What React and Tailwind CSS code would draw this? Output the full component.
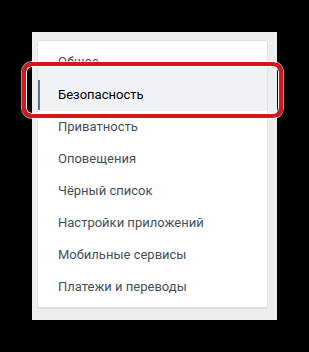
import React from 'react'

const items = [
  'Приватность',
  'Оповещения',
  'Чёрный список',
  'Настройки приложений',
  'Мобильные сервисы',
  'Платежи и переводы',
]

export default function App() {
  return (
    <div
      className="w-[309px] h-[352px] bg-black pt-[32px] pl-[32px]"
      style={{ fontFamily: 'Roboto, "Noto Sans", "Liberation Sans", sans-serif' }}
    >
      <div className="relative w-[245px] h-[288px] bg-[#edeef0] pt-[8px] pl-[5px]">
        <div className="w-[231px] h-[268px] bg-white border border-[#e1e3e6] rounded-[3px] shadow-[0_1px_0_#dcdee3] pt-[5px]">
          <div className="h-[32px] flex items-center pl-[20px] text-[13px] text-[#454f5b]">
            Общее
          </div>
          <div className="relative -mt-[12px] h-[45px] flex items-end bg-[#f0f2f5]">
            <div className="w-[2px] h-[30px] mb-[1px] bg-[#5f7286]" />
            <div className="h-[32px] flex items-center pl-[18px] text-[13px] text-black">
              Безопасность
            </div>
          </div>
          {items.map((t) => (
            <div key={t} className="h-[32px] flex items-center pl-[20px] text-[13px] text-[#454f5b]">
              {t}
            </div>
          ))}
        </div>
        <div className="absolute left-[-10px] top-[30px] w-[261px] h-[56px] rounded-[10px] border-[4px] border-[#d8151c] shadow-[inset_0_0_0_1px_#ffffff,0_0_0_1px_rgba(255,255,255,0.6)]" />
      </div>
    </div>
  )
}
